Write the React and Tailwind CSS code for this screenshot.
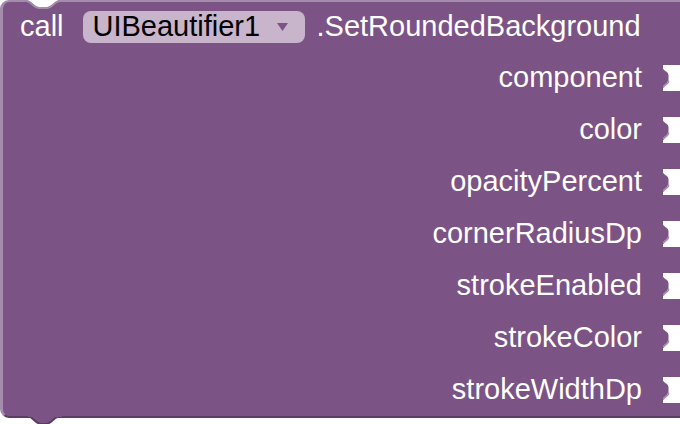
const ARGS = [
  'component',
  'color',
  'opacityPercent',
  'cornerRadiusDp',
  'strokeEnabled',
  'strokeColor',
  'strokeWidthDp',
];

function Socket() {
  return (
    <svg width="17" height="26" viewBox="0 0 17 26" className="block shrink-0">
      <path d="M0 0 H17 V26 H0 V23 C0 20 5.5 20 5.5 15.5 V10.5 C5.5 6 0 6 0 3 Z" fill="#ffffff" />
      <path d="M5.5 15.5 C5.5 20 0 20 0 23" fill="none" stroke="#a98fb0" strokeWidth="1.8" />
    </svg>
  );
}

export default function App() {
  return (
    <div className="relative w-[680px] h-[424px] bg-white overflow-hidden font-['Liberation_Sans',Arial,sans-serif] text-[29px] text-white">
      <div className="relative w-[680px] bg-[#7c5385] rounded-l-[9px] border-t-2 border-l-[3px] border-b-2 border-t-[#a58bac] border-l-[#a58bac] border-b-[#5b3c63]">
        {/* header */}
        <div className="h-[50px] flex items-center pl-[17px]">
          <span>call</span>
          <div className="ml-[19px] h-[32px] w-[222px] rounded-[8px] bg-[#c8b5cc] flex items-center pl-[10px] pr-[17px] text-black">
            <span className="flex-1">UIBeautifier1</span>
            <svg width="11" height="8" viewBox="0 0 11 8" className="block">
              <path d="M0 0 H11 L5.5 8 Z" fill="#7c5385" />
            </svg>
          </div>
          <span className="ml-[12px]">.SetRoundedBackground</span>
        </div>

        {/* arguments */}
        {ARGS.map((a) => (
          <div key={a} className="h-[52px] flex items-center justify-end">
            <span>{a}</span>
            <div className="ml-[21px]">
              <Socket />
            </div>
          </div>
        ))}

        {/* bottom tab */}
        <svg width="34" height="10" viewBox="0 0 34 10" className="absolute left-[25px] -bottom-[10px]">
          <path d="M0 0 C4 0 8 8 13 8 H18 C23 8 27 0 32 0 Z" fill="#7c5385" stroke="#5b3c63" strokeWidth="2" />
          <rect x="0" y="-2" width="34" height="3" fill="#7c5385" />
        </svg>
      </div>

      {/* top notch, drawn over the block edge */}
      <svg width="34" height="10" viewBox="0 0 34 10" className="absolute left-[26px] top-0">
        <path d="M0 0 C5 0 8 7 13 7 H21 C26 7 29 0 34 0 Z" fill="#ffffff" />
        <path d="M0 1 C5 1 8 8 13 8 H21 C26 8 29 1 34 1" fill="none" stroke="#a58bac" strokeWidth="2" />
      </svg>
    </div>
  );
}
